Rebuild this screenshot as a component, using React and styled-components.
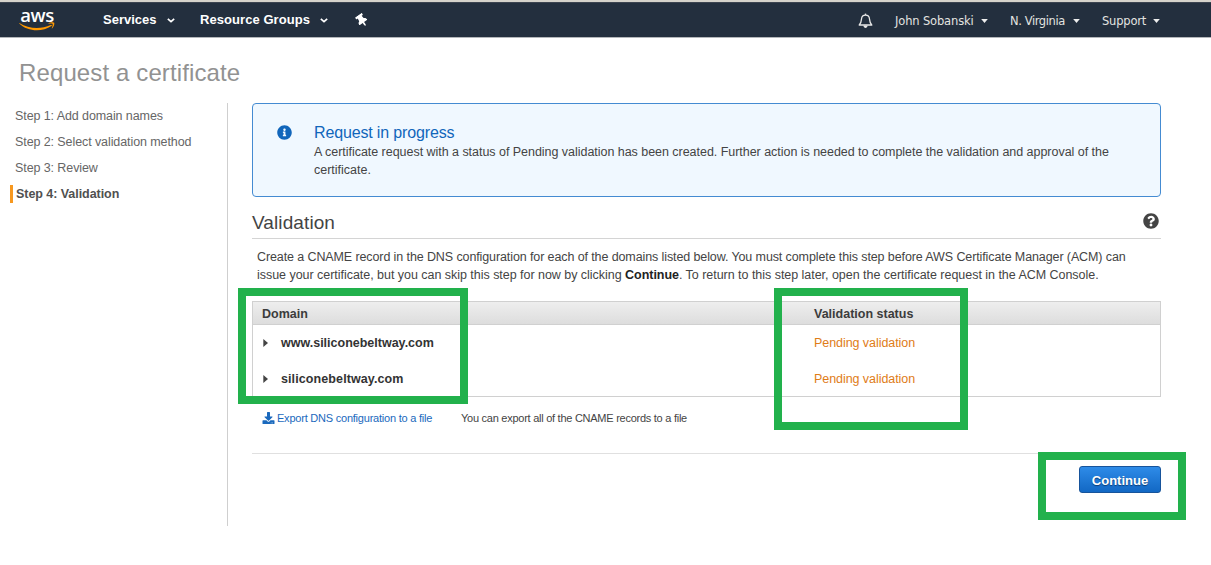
import React from "react";
import styled, { createGlobalStyle } from "styled-components";
import { FaInfoCircle, FaQuestionCircle, FaDownload, FaThumbtack } from "react-icons/fa";

const GlobalStyle = createGlobalStyle`
  * { box-sizing: border-box; }
  body {
    margin: 0;
    background: #fff;
    color: #444;
    font-family: "Liberation Sans", Arial, sans-serif;
    font-size: 12.5px;
    overflow: hidden;
  }
`;

const Page = styled.div`
  position: relative;
  width: 1211px;
  height: 565px;
`;

const NavBar = styled.header`
  display: flex;
  align-items: center;
  height: 38px;
  padding: 0 51px 0 19px;
  background: #232f3e;
  border-top: 2px solid #d6d3cb;
  border-bottom: 1px solid #b3b6ba;
  box-shadow: inset 0 1px 0 #3c4450;
  color: #fff;
`;

const Logo = styled.div`
  display: flex;
  flex-direction: column;
  align-items: center;
  width: 36px;
  height: 24px;
  margin: 0 48px 0 0;
`;

const LogoText = styled.span`
  font: 600 18.5px/15px "Open Sans", sans-serif;
  letter-spacing: -0.5px;
  height: 15px;
  margin-top: -1px;
`;

const MainMenu = styled.nav`
  display: flex;
  align-items: center;
  font-size: 13px;
  font-weight: bold;
`;

const MenuItem = styled.span`
  display: flex;
  align-items: center;
  justify-content: space-between;
  width: ${(p) => p.$width}px;
  margin-right: ${(p) => p.$gap}px;
  letter-spacing: ${(p) => p.$spacing || 0}px;
  white-space: nowrap;
`;

const AccountMenu = styled.nav`
  display: flex;
  align-items: center;
  margin-left: auto;
  padding-top: 2px;
  font-family: "DejaVu Sans", Verdana, sans-serif;
  font-size: 11.5px;
  color: #e4e4e0;
`;

const Title = styled.h1`
  margin: 0;
  padding: 21px 0 0 19px;
  height: 65px;
  font-size: 24px;
  line-height: 28px;
  font-weight: normal;
  letter-spacing: 0.12px;
  color: #929292;
`;

const Body = styled.div`
  display: flex;
`;

const Steps = styled.aside`
  width: 228px;
  height: 423px;
  padding-left: 10px;
  border-right: 1px solid #cfcfcf;
`;

const Step = styled.div`
  height: 18px;
  margin: ${(p) => (p.$first ? "4px" : "8px")} 0 0;
  padding-left: ${(p) => (p.$active ? 3 : 5)}px;
  border-left: ${(p) => (p.$active ? "3px solid #f7981f" : "0")};
  font-size: 12.5px;
  line-height: 18px;
  font-weight: ${(p) => (p.$active ? "bold" : "normal")};
  color: ${(p) => (p.$active ? "#505050" : "#666")};
  letter-spacing: ${(p) => (p.$active ? -0.05 : -0.09)}px;
`;

const Content = styled.main`
  width: 909px;
  margin-left: 24px;
`;

const Notice = styled.section`
  display: flex;
  height: 94px;
  padding: 20px 24px;
  border: 1px solid #448bd2;
  border-radius: 4px;
  background: #f0f8ff;
`;

const NoticeIcon = styled(FaInfoCircle)`
  width: 15px;
  height: 15px;
  margin-top: 1px;
  margin-right: 22px;
  color: #1166bb;
  flex: none;
`;

const NoticeTitle = styled.h2`
  margin: -1px 0 0;
  font-size: 16px;
  line-height: 20px;
  font-weight: normal;
  letter-spacing: -0.15px;
  color: #1166bb;
`;

const Line = styled.div`
  font-size: 12.5px;
  line-height: 18px;
  white-space: nowrap;
  letter-spacing: ${(p) => p.$spacing || 0}px;
`;

const SectionHead = styled.div`
  display: flex;
  align-items: center;
  justify-content: space-between;
  height: 42px;
  padding: 6px 2px 0 0;
  border-bottom: 1px solid #d4d4d4;
`;

const SectionTitle = styled.h2`
  margin: 4px 0 0;
  font-size: 19px;
  font-weight: normal;
  line-height: 24px;
  letter-spacing: 0.1px;
`;

const Description = styled.div`
  padding: 9px 0 0 5px;
  height: 62px;
  b { color: #222; }
`;

const Table = styled.div`
  height: 96px;
  border: 1px solid #d0d0d0;
`;

const HeadRow = styled.div`
  display: grid;
  grid-template-columns: 552px 1fr;
  align-items: center;
  height: 23px;
  padding: 1px 0 0 9px;
  background: linear-gradient(#eee, #ddd);
  border-bottom: 1px solid #d0d0d0;
  font-weight: bold;
  color: #3c3c3c;
`;

const Row = styled.div`
  display: grid;
  grid-template-columns: 19px 533px 1fr;
  align-items: center;
  height: 36px;
  padding-left: 9px;
`;

const Domain = styled.span`
  font-weight: bold;
  color: #333;
  letter-spacing: ${(p) => p.$spacing || 0}px;
`;

const Status = styled.span`
  color: #e07c17;
  letter-spacing: -0.06px;
`;

const ExportRow = styled.div`
  display: flex;
  align-items: center;
  height: 57px;
  padding: 0 0 14px 10px;
  font-size: 11px;
  letter-spacing: -0.26px;
  border-bottom: 1px solid #e0e0e0;
`;

const ExportLink = styled.a`
  display: flex;
  align-items: center;
  gap: 2px;
  width: 199px;
  letter-spacing: -0.22px;
  color: #1a69bd;
  svg { width: 13px; height: 12px; }
`;

const Actions = styled.div`
  display: flex;
  justify-content: flex-end;
  padding-top: 12px;
`;

const Button = styled.button`
  width: 82px;
  height: 27px;
  padding: 1px 0 0;
  border: 1px solid #17549b;
  border-radius: 3px;
  background: linear-gradient(#2e8be8, #1268c4);
  color: #fff;
  font: bold 13px "Liberation Sans", Arial, sans-serif;
  text-shadow: 0 1px 1px #0b3c75;
`;

const Highlight = styled.div`
  position: absolute;
  left: ${(p) => p.$x}px;
  top: ${(p) => p.$y}px;
  width: ${(p) => p.$w}px;
  height: ${(p) => p.$h}px;
  border: 8px solid #22b14c;
  pointer-events: none;
`;

const ChevronIcon = styled.svg`
  margin-top: 2px;
`;

const Chevron = () => (
  <ChevronIcon width="8" height="5" viewBox="0 0 8 5">
    <path d="M0.8 0.8 L4 3.7 L7.2 0.8" fill="none" stroke="#fff" strokeWidth="1.6" />
  </ChevronIcon>
);

const Caret = () => (
  <svg width="7" height="4" viewBox="0 0 7 4">
    <path d="M0.2 0 H6.8 L3.5 4 Z" fill="#eee" />
  </svg>
);

const Bell = () => (
  <svg width="15" height="16" viewBox="0 0 15 16">
    <path
      d="M1.2 12 C3.2 10.3 3.3 8.5 3.5 6 C3.7 3.5 5 2.1 7.5 2.1 C10 2.1 11.3 3.5 11.5 6 C11.7 8.5 11.8 10.3 13.8 12 Z"
      fill="none"
      stroke="#e8e8e8"
      strokeWidth="1.3"
      strokeLinejoin="round"
    />
    <path d="M7.5 0.6 V2" stroke="#e8e8e8" strokeWidth="1.4" />
    <path d="M5.3 12.6 H9.7 C9.4 14.4 8.6 14.9 7.5 14.9 C6.4 14.9 5.6 14.4 5.3 12.6 Z" fill="#e8e8e8" />
  </svg>
);

const Smile = () => (
  <svg width="36" height="9" viewBox="0 0 36 9">
    <path d="M0.3 1 C10 7.2 22 7.5 31.8 3 C32.8 2.6 33.4 3.5 32.5 4.1 C23 10.4 8.5 9.8 0.2 1.6 Z" fill="#f90" />
    <path d="M29.3 1.4 C31.5 0 34.6 0.2 35.2 0.8 C35.7 1.5 35 4.7 33.3 6.3 C32.9 6.6 32.6 6.4 32.8 6 C33.4 4.6 34 2.4 33.6 1.9 C33.2 1.4 31 1.6 29.6 1.8 Z" fill="#f90" />
  </svg>
);

const Pin = styled(FaThumbtack)`
  width: 10px;
  height: 13px;
  margin-top: 2px;
  transform: rotate(-35deg);
`;

const ExpandIcon = styled.svg`
  margin-left: 1px;
`;

const Expand = () => (
  <ExpandIcon width="5" height="8" viewBox="0 0 5 8">
    <path d="M0.3 0 L5 4 L0.3 8 Z" fill="#444" />
  </ExpandIcon>
);

export default function App() {
  return (
    <Page>
      <GlobalStyle />
      <NavBar>
        <Logo>
          <LogoText>aws</LogoText>
          <Smile />
        </Logo>
        <MainMenu>
          <MenuItem $width={72} $gap={25}>Services <Chevron /></MenuItem>
          <MenuItem $width={128} $gap={29} $spacing={0.06}>Resource Groups <Chevron /></MenuItem>
          <Pin />
        </MainMenu>
        <AccountMenu>
          <MenuItem $width={15} $gap={22}><Bell /></MenuItem>
          <MenuItem $width={93} $gap={22} $spacing={-0.15}>John Sobanski <Caret /></MenuItem>
          <MenuItem $width={70} $gap={22} $spacing={-0.4}>N. Virginia <Caret /></MenuItem>
          <MenuItem $width={58} $gap={0} $spacing={-0.2}>Support <Caret /></MenuItem>
        </AccountMenu>
      </NavBar>
      <Title>Request a certificate</Title>
      <Body>
        <Steps>
          <Step $first>Step 1: Add domain names</Step>
          <Step>Step 2: Select validation method</Step>
          <Step>Step 3: Review</Step>
          <Step $active>Step 4: Validation</Step>
        </Steps>
        <Content>
          <Notice>
            <NoticeIcon />
            <div>
              <NoticeTitle>Request in progress</NoticeTitle>
              <Line $spacing={-0.034}>A certificate request with a status of Pending validation has been created. Further action is needed to complete the validation and approval of the</Line>
              <Line>certificate.</Line>
            </div>
          </Notice>
          <SectionHead>
            <SectionTitle>Validation</SectionTitle>
            <FaQuestionCircle size={16} />
          </SectionHead>
          <Description>
            <Line $spacing={-0.105}>Create a CNAME record in the DNS configuration for each of the domains listed below. You must complete this step before AWS Certificate Manager (ACM) can</Line>
            <Line $spacing={-0.032}>issue your certificate, but you can skip this step for now by clicking <b>Continue</b>. To return to this step later, open the certificate request in the ACM Console.</Line>
          </Description>
          <Table>
            <HeadRow><span>Domain</span><span>Validation status</span></HeadRow>
            <Row><Expand /><Domain>www.siliconebeltway.com</Domain><Status>Pending validation</Status></Row>
            <Row><Expand /><Domain $spacing={0.1}>siliconebeltway.com</Domain><Status>Pending validation</Status></Row>
          </Table>
          <ExportRow>
            <ExportLink><FaDownload />Export DNS configuration to a file</ExportLink>
            <span>You can export all of the CNAME records to a file</span>
          </ExportRow>
          <Actions><Button>Continue</Button></Actions>
        </Content>
      </Body>
      <Highlight $x={238} $y={288} $w={230} $h={116} />
      <Highlight $x={774} $y={288} $w={194} $h={142} />
      <Highlight $x={1038} $y={452} $w={148} $h={68} />
    </Page>
  );
}
